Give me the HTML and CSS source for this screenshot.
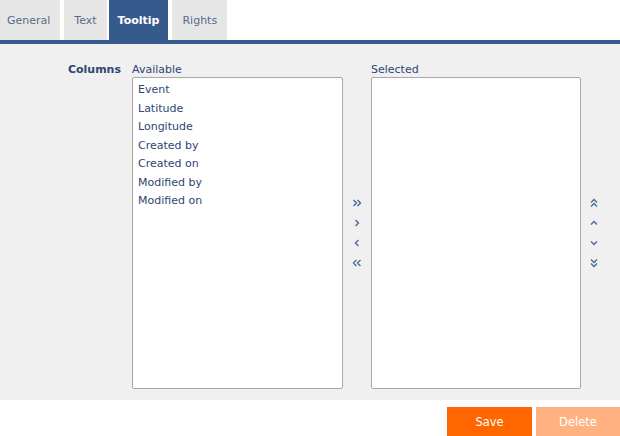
FILE: index.html
```html
<!DOCTYPE html>
<html lang="en">
<head>
  <meta charset="UTF-8" />
  <title>Tooltip</title>
  <link rel="stylesheet" href="styles.css">
</head>
<body>
  <nav class="tabs">
    <a class="tab first">General</a>
    <a class="tab">Text</a>
    <a class="tab active">Tooltip</a>
    <a class="tab">Rights</a>
  </nav>

  <main class="panel">
    <div class="field">
      <label class="field-label">Columns</label>
      <div class="picker">
        <div class="list-col available">
          <span class="list-title">Available</span>
          <ul class="listbox">
            <li>Event</li>
            <li>Latitude</li>
            <li>Longitude</li>
            <li>Created by</li>
            <li>Created on</li>
            <li>Modified by</li>
            <li>Modified on</li>
          </ul>
        </div>

        <div class="moves">
          <button class="move" title="Add all">
            <svg viewBox="0 0 10 10"><path d="M1.5 2l3 3-3 3M5.5 2l3 3-3 3"/></svg>
          </button>
          <button class="move" title="Add">
            <svg viewBox="0 0 10 10"><path d="M3.5 2l3 3-3 3"/></svg>
          </button>
          <button class="move" title="Remove">
            <svg viewBox="0 0 10 10"><path d="M6.5 2l-3 3 3 3"/></svg>
          </button>
          <button class="move" title="Remove all">
            <svg viewBox="0 0 10 10"><path d="M4.5 2l-3 3 3 3M8.5 2l-3 3 3 3"/></svg>
          </button>
        </div>

        <div class="list-col selected">
          <span class="list-title">Selected</span>
          <ul class="listbox"></ul>
        </div>

        <div class="moves order">
          <button class="move" title="Top">
            <svg viewBox="0 0 10 10"><path d="M2 4.5l3-3 3 3M2 8.5l3-3 3 3"/></svg>
          </button>
          <button class="move" title="Up">
            <svg viewBox="0 0 10 10"><path d="M2 6.5l3-3 3 3"/></svg>
          </button>
          <button class="move" title="Down">
            <svg viewBox="0 0 10 10"><path d="M2 3.5l3 3 3-3"/></svg>
          </button>
          <button class="move" title="Bottom">
            <svg viewBox="0 0 10 10"><path d="M2 1.5l3 3 3-3M2 5.5l3 3 3-3"/></svg>
          </button>
        </div>
      </div>
    </div>
  </main>

  <footer class="actions">
    <button class="btn save">Save</button>
    <button class="btn delete">Delete</button>
  </footer>
</body>
</html>
```

FILE: styles.css
```css
body {
  margin: 0;
  padding: 0;
  font-family: "DejaVu Sans", Verdana, sans-serif;
  font-size: 11px;
  color: #2e4670;
  background-color: white;
}

.tabs {
  display: flex;
  gap: 4px;
  height: 40px;
  border-bottom: 4px solid #375a8c;
}

.tab {
  display: flex;
  align-items: center;
  padding: 0 10px;
  background-color: #e6e6e6;
  color: #566b8c;
  font-size: 11px;
}

.tab.first {
  padding-left: 7px;
}

.tab.active {
  background-color: #375a8c;
  color: white;
  font-weight: bold;
  padding: 0 9px;
  margin-left: -2px;
}

.panel {
  background-color: #f0f0f0;
  height: 356px;
  padding-top: 18px;
  box-sizing: border-box;
}

.field {
  display: flex;
}

.field-label {
  width: 121px;
  padding-right: 11px;
  text-align: right;
  font-weight: bold;
  line-height: 15px;
}

.picker {
  display: flex;
}

.list-col {
  display: flex;
  flex-direction: column;
}

.list-title {
  line-height: 15px;
}

.listbox {
  list-style: none;
  margin: 0;
  padding: 3px 5px;
  width: 211px;
  height: 312px;
  box-sizing: border-box;
  background: white;
  border: 1px solid #a8a8a8;
  border-radius: 2px;
}

.selected .listbox {
  width: 210px;
}

.listbox li {
  line-height: 18.5px;
  white-space: nowrap;
}

.moves {
  display: flex;
  flex-direction: column;
  justify-content: center;
  align-items: center;
  width: 28px;
  padding-top: 15px;
}

.moves.order {
  width: 26px;
}

.move {
  width: 12px;
  height: 20px;
  padding: 0;
  border: none;
  background: none;
  display: flex;
  align-items: center;
  justify-content: center;
}

.move svg {
  width: 10px;
  height: 10px;
  fill: none;
  stroke: #4a6a9c;
  stroke-width: 1.4;
}

.actions {
  display: flex;
  justify-content: flex-end;
  gap: 4px;
  padding-top: 7px;
}

.btn {
  width: 85px;
  height: 30px;
  border: none;
  color: white;
  font-family: "DejaVu Sans", Verdana, sans-serif;
  font-size: 11.5px;
}

.save { background-color: #ff6600; }
.delete { background-color: #ffb27f; width: 84px; }
```
